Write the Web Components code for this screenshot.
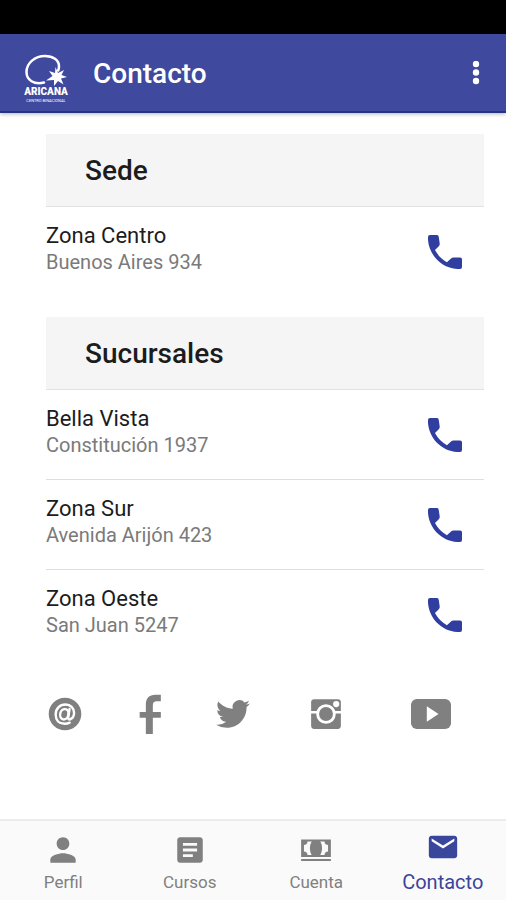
<!DOCTYPE html>
<html lang="es">
<head>
<meta charset="utf-8">
<meta name="viewport" content="width=device-width, initial-scale=1">
<title>Contacto</title>
<style>
    body{
        margin: 0;
        background: #fff;
        color: #1c1c1c;
        font-family: Roboto, "Liberation Sans", sans-serif;
    }
</style>
</head>
<body>
<contact-page></contact-page>

<script>
const icons = {
    phone: '<path d="M3 4Q3 3 4 3H7.800Q8.600 3 8.700 4L9.200 7.500Q9.300 8.300 8.700 8.900L6.700 11C8.200 13.800 10.300 15.900 13 17.400L15.200 15.400Q15.700 14.900 16.500 14.900H20Q21 14.900 21 15.900V20Q21 21 20 21H18.500C10 20.500 3.500 13.500 3 5.500z"/>',
    more: '<circle cx="12" cy="3" r="3.200"/><circle cx="12" cy="11.500" r="3.200"/><circle cx="12" cy="20" r="3.200"/>',
    mail: '<circle cx="12" cy="12" r="11.5"/><g fill="none" stroke="#fff" stroke-width="1.700" stroke-linecap="round"><ellipse cx="11.5" cy="12.2" rx="2.900" ry="3.700" transform="rotate(14 11.5 12.2)"/><path d="M15.200 8.500l-.9 5.700c-.2 1.300.4 1.900 1.400 1.500 1.700-.6 2.700-2.400 2.700-4.500 0-3.600-2.500-5.900-6-5.900-4.200 0-7 3-7 7.100 0 4 2.500 6.500 6.300 6.500 1.400 0 2.600-.3 3.600-.8"/></g>',
    facebook: '<path d="M9.500 24V14.300H5.800V10.800h3.700V6.500C9.500 2.600 11.400.500 15.200.500h3.300v3.800h-2.300c-1.800 0-2.500.7-2.500 2.500v4h4.800v3.500h-4.800V24z"/>',
    twitter: '<path d="M23.950 4.570a10 10 0 0 1-2.820.770 4.960 4.960 0 0 0 2.160-2.720c-.950.550-2 .950-3.130 1.180a4.920 4.920 0 0 0-8.380 4.480C7.690 8.090 4.070 6.130 1.640 3.160a4.820 4.820 0 0 0-.670 2.480c0 1.710.870 3.210 2.190 4.100a4.900 4.900 0 0 1-2.230-.620v.060a4.920 4.920 0 0 0 3.950 4.830 5 5 0 0 1-2.210.080 4.940 4.940 0 0 0 4.600 3.420A9.870 9.870 0 0 1 0 19.540a13.990 13.990 0 0 0 7.550 2.210c9.050 0 14-7.500 14-13.980 0-.210 0-.420-.020-.630a9.940 9.940 0 0 0 2.420-2.570z"/>',
    instagram: '<rect x="1.500" y="1.500" width="21" height="21" rx="2.200"/><g fill="none" stroke="#fff"><path stroke-width="1.800" d="M0 10.800h6M18 10.800h6"/><circle cx="12" cy="12" r="5.900" stroke-width="2"/></g><circle cx="19.200" cy="5" r="2.200" fill="#fff"/>',
    youtube: '<rect x="0" y="3" width="24" height="18" rx="3.500"/><path fill="#fff" d="M9.500 7.300v9.400l7-4.700z"/>',
    person: '<path d="M12 12c2.210 0 4-1.790 4-4s-1.790-4-4-4-4 1.790-4 4 1.790 4 4 4zm0 2c-2.670 0-8 1.340-8 4v2h16v-2c0-2.660-5.330-4-8-4z"/>',
    article: '<path d="M19 3H5c-1.100 0-2 .900-2 2v14c0 1.100.900 2 2 2h14c1.100 0 2-.900 2-2V5c0-1.100-.900-2-2-2zm-5 14H7v-2h7v2zm3-4H7v-2h10v2zm0-4H7V7h10v2z"/>',
    cash: '<path d="M1.500 4.500h21V17h-21zM1.500 18.300h21v1.400h-21z"/><path fill="#fafafa" d="M6 6h3C7.300 8.500 7.300 13 9 15.500H6c0-1.500-1-2.500-2.500-2.500V8.500C5 8.500 6 7.500 6 6zM18 6h-3c1.700 2.500 1.700 7 0 9.500h3c0-1.500 1-2.500 2.500-2.500V8.500C19 8.500 18 7.500 18 6z"/>',
    envelope: '<path d="M20 4H4c-1.100 0-2 .900-2 2v12c0 1.100.900 2 2 2h16c1.100 0 2-.900 2-2V6c0-1.100-.900-2-2-2zm0 4l-8 5-8-5V6l8 5 8-5v2z"/>'
}

class AppIcon extends HTMLElement{
    constructor(){
        super()
        this.attachShadow({mode:'open'});
    }
    connectedCallback(){
        const box = this.getAttribute('box') || '0 0 24 24';
        this.shadowRoot.innerHTML = `
            <style>
                :host{
                    display: block;
                    width: 24px;
                    height: 24px;
                }
                svg{
                    display: block;
                    width: 100%;
                    height: 100%;
                    fill: currentColor;
                }
            </style>
            <svg viewBox="${box}" aria-hidden="true">${icons[this.getAttribute('name')]}</svg>
        `
    }
}

class BrandLogo extends HTMLElement{
    constructor(){
        super()
        this.attachShadow({mode:'open'});
        this.shadowRoot.innerHTML = `
            <style>
                :host{
                    display: block;
                    width: 44px;
                    height: 48px;
                }
                svg{
                    display: block;
                    overflow: visible;
                    fill: #fff;
                    font-family: Roboto, "Liberation Sans", sans-serif;
                    font-weight: 900;
                }
            </style>
            <svg width="44" height="48" viewBox="0 0 44 48" role="img" aria-label="Aricana">
                <path fill="none" stroke="#fff" stroke-width="2.500" stroke-linecap="round" d="M20 28.500C10 31 2.500 26 2.500 18 2.500 9 11 2 21 2c8 0 14 4 14 10.500 0 1.500-.2 2.500-.8 4"/>
                <path d="M31.500 13l2.500 6 6-3-2.500 5 5.500 2-6 1.500 2.500 6-5.500-3.500-4 5v-6l-8 .5 6.500-4.500-3.500-5 6 2z"/>
                <text x="22" y="41" font-size="10" text-anchor="middle">ARICANA</text>
                <text x="22" y="48" font-size="4" text-anchor="middle" font-weight="400">CENTRO BINACIONAL</text>
            </svg>
        `
    }
}

class AppBar extends HTMLElement{
    constructor(){
        super()
        this.attachShadow({mode:'open'});
        this.shadowRoot.innerHTML = `
            <style>
                :host{
                    display: block;
                    border-top: 34px solid #000;
                    box-shadow: 0 1px 4px rgba(0,0,0,0.3);
                }
                header{
                    display: flex;
                    align-items: center;
                    box-sizing: border-box;
                    height: 79px;
                    padding: 2px 18px 0 24px;
                    background: #3f499e;
                    border-bottom: 2px solid #253583;
                    color: #fff;
                }
                brand-logo{
                    margin-top: 8px;
                }
                h1{
                    flex: 1;
                    margin: 0 0 0 25px;
                    font-size: 28px;
                    line-height: 32px;
                    font-weight: 500;
                }
                button{
                    padding: 0 0 2px;
                    border: 0;
                    background: none;
                    color: inherit;
                    cursor: pointer;
                }
            </style>
            <header>
                <brand-logo></brand-logo>
                <h1><slot></slot></h1>
                <button aria-label="Más opciones"><app-icon name="more"></app-icon></button>
            </header>
        `
    }
}

class ContactGroup extends HTMLElement{
    constructor(){
        super()
        this.attachShadow({mode:'open'});
        this.shadowRoot.innerHTML = `
            <style>
                :host{
                    display: block;
                }
                h2{
                    margin: 0;
                    padding: 21px 39px 19px;
                    background: #f5f5f5;
                    border-bottom: 1px solid #e2e2e2;
                    font-size: 28px;
                    line-height: 32px;
                    font-weight: 500;
                }
            </style>
            <section>
                <h2></h2>
                <slot></slot>
            </section>
        `
    }
    connectedCallback(){
        this.shadowRoot.querySelector('h2').textContent = this.getAttribute('heading');
    }
}

class ContactRow extends HTMLElement{
    constructor(){
        super()
        this.attachShadow({mode:'open'});
        this.shadowRoot.innerHTML = `
            <style>
                :host{
                    display: flex;
                    align-items: center;
                    justify-content: space-between;
                    box-sizing: border-box;
                    height: 90px;
                    padding-right: 22px;
                    border-bottom: 1px solid #dedede;
                }
                :host(:last-of-type){
                    border-bottom-color: transparent;
                }
                h3, p{
                    margin: 0;
                    font-weight: 400;
                }
                .text{
                    padding-bottom: 8px;
                }
                h3{
                    font-size: 22px;
                    line-height: 28px;
                }
                p{
                    color: #7a7a7a;
                    font-size: 20px;
                    line-height: 24px;
                }
                button{
                    padding: 0;
                    border: 0;
                    background: none;
                    color: #303f9f;
                    cursor: pointer;
                }
                app-icon{
                    width: 34px;
                    height: 34px;
                }
            </style>
            <div class="text">
                <h3><slot></slot></h3>
                <p><slot name="address"></slot></p>
            </div>
            <button aria-label="Llamar"><app-icon name="phone" box="3 3 18 18"></app-icon></button>
        `
    }
}

class SocialLinks extends HTMLElement{
    constructor(){
        super()
        this.attachShadow({mode:'open'});
        this.shadowRoot.innerHTML = `
            <style>
                :host{
                    display: block;
                }
                nav{
                    display: grid;
                    grid-template-columns: 84fr 85fr 82fr 104fr 106fr;
                    align-items: center;
                    justify-items: center;
                }
                a{
                    color: #808080;
                }
                app-icon{
                    width: 34px;
                    height: 34px;
                }
                .large{
                    width: 40px;
                    height: 40px;
                }
            </style>
            <nav>
                <a href="#correo" aria-label="Correo"><app-icon name="mail"></app-icon></a>
                <a href="#facebook" aria-label="Facebook"><app-icon name="facebook" class="large"></app-icon></a>
                <a href="#twitter" aria-label="Twitter"><app-icon name="twitter"></app-icon></a>
                <a href="#instagram" aria-label="Instagram"><app-icon name="instagram"></app-icon></a>
                <a href="#youtube" aria-label="YouTube"><app-icon name="youtube" class="large"></app-icon></a>
            </nav>
        `
    }
}

class TabItem extends HTMLElement{
    constructor(){
        super()
        this.attachShadow({mode:'open'});
    }
    connectedCallback(){
        this.shadowRoot.innerHTML = `
            <style>
                :host{
                    display: block;
                    flex: 1;
                    color: #808080;
                    font-size: 17px;
                }
                :host([active]){
                    color: #3a459c;
                    font-size: 20px;
                }
                a{
                    display: flex;
                    flex-direction: column;
                    align-items: center;
                    gap: 3px;
                    padding: 12px 0 6px;
                    color: inherit;
                    line-height: 24px;
                    text-decoration: none;
                }
                :host([active]) a{
                    gap: 6px;
                    padding-top: 9px;
                }
                app-icon{
                    width: 34px;
                    height: 34px;
                }
                app-icon[name="person"]{
                    margin: -2px 0;
                    width: 38px;
                    height: 38px;
                }
            </style>
            <a href="#${this.getAttribute('icon')}">
                <app-icon name="${this.getAttribute('icon')}"></app-icon>
                <slot></slot>
            </a>
        `
    }
}

class TabBar extends HTMLElement{
    constructor(){
        super()
        this.attachShadow({mode:'open'});
        this.shadowRoot.innerHTML = `
            <style>
                :host{
                    display: block;
                    background: #fafafa;
                    border-top: 2px solid #ececec;
                }
                nav{
                    display: flex;
                }
            </style>
            <nav><slot></slot></nav>
        `
    }
}

class ContactPage extends HTMLElement{
    constructor(){
        super()
        this.attachShadow({mode:'open'});
        this.shadowRoot.innerHTML = `
            <style>
                :host{
                    display: flex;
                    flex-direction: column;
                    min-height: 100vh;
                }
                main{
                    flex: 1;
                    padding: 21px 22px 0 23px;
                }
                .groups{
                    display: flex;
                    flex-direction: column;
                    gap: 20px;
                    padding-left: 23px;
                }
                social-links{
                    padding: 34px 0;
                }
            </style>
            <app-bar>Contacto</app-bar>
            <main>
                <div class="groups">
                    <contact-group heading="Sede">
                        <contact-row>Zona Centro<span slot="address">Buenos Aires 934</span></contact-row>
                    </contact-group>
                    <contact-group heading="Sucursales">
                        <contact-row>Bella Vista<span slot="address">Constitución 1937</span></contact-row>
                        <contact-row>Zona Sur<span slot="address">Avenida Arijón 423</span></contact-row>
                        <contact-row>Zona Oeste<span slot="address">San Juan 5247</span></contact-row>
                    </contact-group>
                </div>
                <social-links></social-links>
            </main>
            <tab-bar>
                <tab-item icon="person">Perfil</tab-item>
                <tab-item icon="article">Cursos</tab-item>
                <tab-item icon="cash">Cuenta</tab-item>
                <tab-item icon="envelope" active>Contacto</tab-item>
            </tab-bar>
        `
    }
}

window.customElements.define('app-icon',AppIcon)
window.customElements.define('brand-logo',BrandLogo)
window.customElements.define('app-bar',AppBar)
window.customElements.define('contact-group',ContactGroup)
window.customElements.define('contact-row',ContactRow)
window.customElements.define('social-links',SocialLinks)
window.customElements.define('tab-item',TabItem)
window.customElements.define('tab-bar',TabBar)
window.customElements.define('contact-page',ContactPage)
</script>
</body>
</html>
